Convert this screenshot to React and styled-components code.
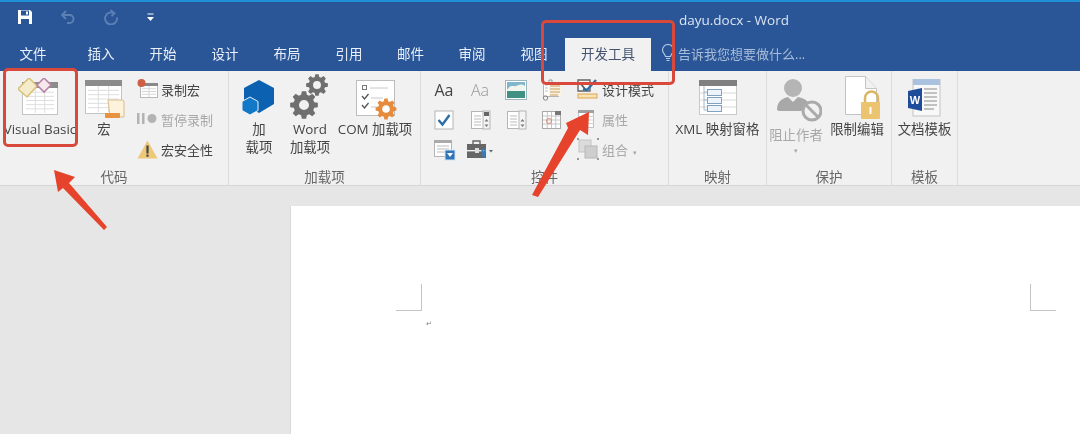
import React from "react";
import styled, { createGlobalStyle } from "styled-components";

const CJK = `"Open Sans", "Noto Sans CJK SC", sans-serif`;

const Global = createGlobalStyle`
  html, body { margin: 0; padding: 0; background: #e6e6e6; }
  body { font-family: ${CJK}; overflow: hidden; }
  #root { width: 1080px; height: 434px; overflow: hidden; }
`;

const Shell = styled.div`
  position: relative;
  width: 1080px;
  height: 434px;
  display: flex;
  flex-direction: column;
  overflow: hidden;
  filter: blur(0.3px);
`;
const Header = styled.header`
  background: #2a5698;
  border-top: 2px solid #1f8fd6;
  color: #fff;
`;
const TitleBar = styled.div`
  height: 36px;
  display: flex;
  align-items: center;
  padding-left: 17px;
`;
const QuickButton = styled.span`
  width: 43px;
  display: flex;
  align-items: center;
  margin-bottom: 6px;
  opacity: ${p => (p.$dim ? 0.4 : 1)};
`;
const DocTitle = styled.div`
  margin-left: 490px;
  font-size: 13.5px;
  color: #dbe4f2;
  white-space: nowrap;
`;
const TabRow = styled.nav`
  height: 33px;
  display: flex;
  align-items: stretch;
`;
const Tab = styled.div`
  width: ${p => p.$w || 62}px;
  padding-right: ${p => p.$pr || 0}px;
  box-sizing: border-box;
  display: flex;
  align-items: center;
  justify-content: center;
  font-size: 13.5px;
  padding-bottom: 3px;
  color: ${p => (p.$active ? "#44546f" : "#eaf0f8")};
  background: ${p => (p.$active ? "#f1f1f1" : "transparent")};
`;
const TellMe = styled.div`
  display: flex;
  align-items: center;
  gap: 3px;
  margin-left: 10px;
  padding-bottom: 3px;
  font-size: 13px;
  color: #a9bcd9;
`;
const Ribbon = styled.section`
  height: 114px;
  background: #f1f1f1;
  border-bottom: 1px solid #d6d6d6;
  display: flex;
`;
const Group = styled.div`
  width: ${p => p.$w}px;
  box-sizing: border-box;
  border-right: 1px solid #dcdcdc;
  display: flex;
  flex-direction: column;
`;
const GroupBody = styled.div`
  flex: 1;
  display: flex;
  padding: 4px 0 0 ${p => p.$pl || 0}px;
  min-height: 0;
`;
const GroupLabel = styled.div`
  height: 16px;
  line-height: 16px;
  text-align: center;
  font-size: 13.5px;
  color: #666;
`;
const Large = styled.div`
  width: ${p => p.$w}px;
  flex: none;
  display: flex;
  flex-direction: column;
  align-items: center;
  font-size: 13.4px;
  line-height: 18px;
  color: ${p => (p.$off ? "#a8a8a8" : "#444")};
  white-space: nowrap;
  text-align: center;
`;
const LargeIcon = styled.div`
  height: ${p => p.$h || 45}px;
  display: flex;
  align-items: center;
  justify-content: center;
`;
const Caret = styled.div`
  font-size: 7px;
  line-height: 14px;
  color: #a8a8a8;
`;
const TinyCaret = styled.span`
  margin-left: 5px;
  font-size: 7px;
  color: #a8a8a8;
`;
const SmallColumn = styled.div`
  margin-left: ${p => p.$ml || 0}px;
  margin-top: -1px;
  display: flex;
  flex-direction: column;
`;
const SmallRow = styled.div`
  height: 30px;
  display: flex;
  align-items: center;
  gap: ${p => p.$gap || 3}px;
  font-size: 13px;
  white-space: nowrap;
  color: ${p => (p.$off ? "#a8a8a8" : "#444")};
`;
const ControlGrid = styled.div`
  display: grid;
  grid-template-columns: repeat(4, 36px);
  grid-auto-rows: 30px;
  align-items: center;
  justify-items: center;
`;
const AaGlyph = styled.span`
  font-family: "Open Sans", sans-serif;
  font-size: 16px;
  font-weight: ${p => (p.$light ? 300 : 400)};
  color: ${p => (p.$light ? "#999" : "#444")};
`;
const Workspace = styled.main`
  flex: 1;
  min-height: 0;
  background: #e6e6e6;
  padding: 20px 0 0 290px;
  display: flex;
`;
const Page = styled.div`
  flex: 1;
  background: #fff;
  border-left: 1px solid #d8d8d8;
  box-sizing: border-box;
  padding: 78px 24px 0 105px;
`;
const MarkRow = styled.div`
  display: flex;
  justify-content: space-between;
`;
const CropMark = styled.div`
  width: 25px;
  height: 26px;
  border-bottom: 1px solid #c4c4c4;
  border-right: ${p => (p.$right ? "none" : "1px solid #c4c4c4")};
  border-left: ${p => (p.$right ? "1px solid #c4c4c4" : "none")};
`;
const ParaMark = styled.div`
  margin: 8px 0 0 30px;
  font-size: 7px;
  line-height: 10px;
  color: #777;
`;
const Highlight = styled.div`
  position: absolute;
  left: ${p => p.$x}px;
  top: ${p => p.$y}px;
  width: ${p => p.$w}px;
  height: ${p => p.$h}px;
  box-sizing: border-box;
  border: 3px solid #d8493c;
  border-radius: 5px;
  pointer-events: none;
`;
const Arrows = styled.svg`
  position: absolute;
  left: 0;
  top: 0;
  pointer-events: none;
`;

const gearPath = (cx, cy, R, r, hole, teeth = 8) => {
  const pts = [];
  const step = (Math.PI * 2) / teeth;
  for (let i = 0; i < teeth; i++) {
    const a = i * step;
    [[-0.3, r], [-0.17, R], [0.17, R], [0.3, r]].forEach(([o, rad]) => {
      const t = a + o * step * 1.15;
      pts.push(`${(cx + rad * Math.cos(t)).toFixed(2)} ${(cy + rad * Math.sin(t)).toFixed(2)}`);
    });
  }
  return `M${pts.join("L")}Z M${cx - hole} ${cy}a${hole} ${hole} 0 1 0 ${hole * 2} 0a${hole} ${hole} 0 1 0 ${-hole * 2} 0Z`;
};

const Gear = ({ cx, cy, R, color }) => (
  <path d={gearPath(cx, cy, R, R * 0.76, R * 0.36)} fill={color} fillRule="evenodd" />
);

const SheetLines = ({ x, y, w, h, rows = 4, cols = 3, color = "#d4d4d4" }) => (
  <g stroke={color} strokeWidth="1">
    {Array.from({ length: rows }, (_, i) => (
      <line key={i} x1={x} x2={x + w} y1={y + ((i + 1) * h) / (rows + 1)} y2={y + ((i + 1) * h) / (rows + 1)} />
    ))}
    {Array.from({ length: cols - 1 }, (_, i) => (
      <line key={i} y1={y} y2={y + h} x1={x + ((i + 1) * w) / cols} x2={x + ((i + 1) * w) / cols} />
    ))}
  </g>
);

const SaveIcon = () => (
  <svg width="16" height="16" viewBox="0 0 16 16">
    <path d="M1 1h12l2 2v12H1z" fill="#fff" />
    <rect x="4" y="1.5" width="8" height="5" fill="#2a5698" />
    <rect x="4" y="10" width="8" height="5" fill="#2a5698" />
    <rect x="9" y="2.5" width="2" height="3" fill="#fff" />
  </svg>
);
const UndoIcon = ({ flip }) => (
  <svg width="16" height="16" viewBox="0 0 16 16" fill="none" stroke="#a9c0e0" strokeWidth="1.8">
    {flip ? (
      <g>
        <path d="M11 4.2A6 6 0 1 0 14 8.5" />
        <path d="M7.5 1l4 3.2-3 3" />
      </g>
    ) : (
      <g>
        <path d="M2.5 6h7a4 4 0 0 1 0 8H7" />
        <path d="M6 2L2 6l4 4" />
      </g>
    )}
  </svg>
);
const DropIcon = () => (
  <svg width="9" height="9" viewBox="0 0 9 9">
    <rect x="1.5" y="0.5" width="6" height="1" fill="#fff" />
    <path d="M1 4h7L4.5 8z" fill="#fff" />
  </svg>
);
const BulbIcon = () => (
  <svg width="14" height="18" viewBox="0 0 14 18" fill="none" stroke="#b9cbe4" strokeWidth="1.1">
    <path d="M4.5 12.5C4 10 1.5 9 1.5 6a5.5 5.5 0 0 1 11 0c0 3-2.5 4-3 6.5z" />
    <path d="M5 14.5h4M5.5 16.5h3" />
  </svg>
);
const VbIcon = () => (
  <svg width="44" height="40" viewBox="0 0 44 40">
    <rect x="4.5" y="4.5" width="35" height="32" fill="#fff" stroke="#c4c4c4" />
    <rect x="4" y="4" width="36" height="6" fill="#8c8c8c" />
    <SheetLines x={8} y={10} w={28} h={25} rows={5} cols={3} color="#dedede" />
    <path d="M0 11L11 0l8 8-10 11z" fill="#f4eccb" stroke="#d9c27a" strokeWidth="1.6" />
    <path d="M19 7l7-7 7 7-7 7z" fill="#f6e9ee" stroke="#b983a8" strokeWidth="1.6" />
  </svg>
);
const MacroIcon = () => (
  <svg width="42" height="42" viewBox="0 0 42 42">
    <rect x="2.5" y="3.5" width="36" height="33" fill="#fff" stroke="#c4c4c4" />
    <rect x="2" y="3" width="37" height="6" fill="#8c8c8c" />
    <SheetLines x={5} y={9} w={31} h={26} rows={5} cols={3} color="#dedede" />
    <path d="M25 23h14a2 2 0 0 1 2 2v15H27z" fill="#fdf3dc" stroke="#d8bd88" />
    <rect x="22" y="36" width="15" height="5" rx="1" fill="#e9923e" />
  </svg>
);
const RecordIcon = () => (
  <svg width="21" height="20" viewBox="0 0 21 20">
    <rect x="3.5" y="4.5" width="17" height="14" fill="#fff" stroke="#b9b9b9" />
    <rect x="3" y="4" width="18" height="3" fill="#888" />
    <SheetLines x={5} y={7} w={14} h={11} rows={3} cols={2} color="#d6d6d6" />
    <circle cx="4.5" cy="4" r="4" fill="#cf5f43" />
  </svg>
);
const PauseIcon = () => (
  <svg width="21" height="14" viewBox="0 0 21 14" fill="#b3b3b3">
    <rect x="0" y="1" width="2.5" height="11" />
    <rect x="5" y="1" width="2.5" height="11" />
    <circle cx="15" cy="6.5" r="4.5" />
  </svg>
);
const WarnIcon = () => (
  <svg width="21" height="19" viewBox="0 0 21 19">
    <path d="M10.5 0.5l10 18H.5z" fill="#edc879" />
    <rect x="9.4" y="5.5" width="2.2" height="8" fill="#444" />
    <rect x="9.4" y="14.5" width="2.2" height="2.2" fill="#444" />
  </svg>
);
const HexIcon = () => (
  <svg width="34" height="36" viewBox="0 0 34 36">
    <path d="M17 0l15 8v16l-15 9-15-9V8z" fill="#0c62b0" />
    <path d="M8 17l8 4.5v9L8 35l-8-4.5v-9z" fill="#1279c9" stroke="#f1f1f1" strokeWidth="1" />
  </svg>
);
const GearsIcon = () => (
  <svg width="40" height="47" viewBox="0 0 40 47">
    <Gear cx={27} cy={11} R={11} color="#6f6f6f" />
    <Gear cx={14} cy={31} R={14} color="#6f6f6f" />
  </svg>
);
const ComIcon = () => (
  <svg width="44" height="44" viewBox="0 0 44 44">
    <rect x="3.5" y="4.5" width="38" height="35" fill="#fff" stroke="#bdbdbd" />
    <rect x="9.5" y="9.5" width="4" height="4" fill="none" stroke="#777" />
    <g fill="none" stroke="#555" strokeWidth="1.3">
      <path d="M9 20l2.5 3 4-5" />
      <path d="M9 29l2.5 3 4-5" />
    </g>
    <g stroke="#c8c8c8">
      <line x1="17" y1="12" x2="35" y2="12" />
      <line x1="18" y1="22" x2="30" y2="22" />
      <line x1="18" y1="31" x2="26" y2="31" />
    </g>
    <Gear cx={33} cy={33} R={10.5} color="#e68a3c" />
  </svg>
);
const CheckBoxIcon = () => (
  <svg width="20" height="20" viewBox="0 0 20 20">
    <rect x="1" y="1" width="18" height="18" fill="#fff" stroke="#b5b5b5" />
    <path d="M4.5 10l4 4.5L15.5 5" fill="none" stroke="#2f6ea5" strokeWidth="2.4" />
  </svg>
);
const PictureIcon = () => (
  <svg width="22" height="20" viewBox="0 0 22 20">
    <rect x="0.5" y="0.5" width="21" height="19" fill="#fff" stroke="#9cb6bb" />
    <rect x="2" y="2" width="18" height="8" fill="#7fb6cc" />
    <path d="M2 10c4-6 6-3 9-4s5-3 9 0v5H2z" fill="#f2f5ef" />
    <rect x="2" y="11" width="18" height="7" fill="#3f9183" />
  </svg>
);
const BuildingIcon = () => (
  <svg width="20" height="22" viewBox="0 0 20 22">
    <rect x="1.5" y="3.5" width="15" height="14" fill="#fff" stroke="#b5b5b5" />
    <rect x="7" y="5" width="12" height="12" fill="#fbf3e2" />
    <path d="M8 7h10M8 10h10M8 13h10M8 16h8" stroke="#c99c60" />
    <path d="M3 6h3M3 9h3M3 12h3" stroke="#bbb" />
    <path d="M7 3V1h3v2" fill="none" stroke="#999" />
    <circle cx="3.5" cy="19" r="2.2" fill="none" stroke="#888" />
  </svg>
);
const ListBoxIcon = ({ dark }) => (
  <svg width="22" height="20" viewBox="0 0 22 20">
    <rect x="2.5" y="1.5" width="18" height="17" fill="#fff" stroke="#b5b5b5" />
    <rect x="14" y="1" width="7" height="18" fill="#f4f4f4" stroke="#b5b5b5" />
    {dark && <rect x="15" y="2" width="5" height="4" fill="#666" />}
    <path d="M5 6h7M5 9h7M5 12h7M5 15h7" stroke="#bbb" />
    <path d="M17.5 9l-2 2.5h4zM17.5 17l-2-2.5h4z" fill="#777" />
  </svg>
);
const CalendarIcon = () => (
  <svg width="20" height="20" viewBox="0 0 20 20">
    <rect x="0.5" y="1.5" width="18" height="17" fill="#fff" stroke="#aaa" />
    <SheetLines x={1} y={2} w={17} h={16} rows={3} cols={4} color="#c4c4c4" />
    <rect x="13" y="1" width="6" height="4" fill="#777" />
    <circle cx="7" cy="11" r="2.5" fill="none" stroke="#d58b70" />
  </svg>
);
const ComboIcon = () => (
  <svg width="24" height="22" viewBox="0 0 24 22">
    <rect x="2.5" y="1.5" width="17" height="16" fill="#fff" stroke="#b5b5b5" />
    <rect x="2" y="1" width="18" height="3" fill="#aaa" />
    <path d="M5 7h12M5 10h12M5 13h8" stroke="#bbb" />
    <rect x="13" y="11" width="10" height="10" fill="#2f75b5" stroke="#cfe3f6" />
    <path d="M15 14h6l-3 4z" fill="#fff" />
  </svg>
);
const ToolboxIcon = () => (
  <svg width="26" height="20" viewBox="0 0 26 20">
    <rect x="0" y="4" width="19" height="14" fill="#666" />
    <path d="M6 4V1h7v3" fill="none" stroke="#666" strokeWidth="1.4" />
    <rect x="0" y="10" width="19" height="1.4" fill="#f1f1f1" />
    <rect x="8" y="8" width="4" height="5" fill="#ddd" />
    <path d="M15 9l2 9M18 9l-1 9" stroke="#3a7cb8" strokeWidth="2" />
    <path d="M22 10h4l-2 2.5z" fill="#666" />
  </svg>
);
const DesignIcon = () => (
  <svg width="22" height="22" viewBox="0 0 22 22">
    <path d="M1 2h12v11H1z" fill="#f6f6f6" stroke="#666" strokeWidth="1.4" />
    <path d="M3 5l6 7" stroke="#555" strokeWidth="1.6" />
    <path d="M6 11l4 1 9-10" fill="none" stroke="#2f6ea5" strokeWidth="2.4" />
    <rect x="1" y="16" width="19" height="4" fill="#f7e3b6" stroke="#e0a548" />
  </svg>
);
const PropsIcon = () => (
  <svg width="18" height="20" viewBox="0 0 18 20">
    <rect x="1.5" y="1.5" width="15" height="17" fill="#fff" stroke="#c4c4c4" />
    <rect x="1" y="1" width="16" height="3" fill="#a0a0a0" />
    <SheetLines x={2} y={4} w={14} h={14} rows={3} cols={2} color="#d4d4d4" />
  </svg>
);
const GroupIcon = () => (
  <svg width="22" height="22" viewBox="0 0 22 22">
    <rect x="2" y="2" width="12" height="12" fill="#dcdcdc" stroke="#c4c4c4" />
    <rect x="8" y="8" width="12" height="12" fill="#cecece" stroke="#b8b8b8" />
    <g fill="#999">
      <rect x="0" y="0" width="2" height="2" />
      <rect x="20" y="20" width="2" height="2" />
      <rect x="20" y="0" width="2" height="2" />
      <rect x="0" y="20" width="2" height="2" />
    </g>
  </svg>
);
const XmlPaneIcon = () => (
  <svg width="40" height="37" viewBox="0 0 40 37">
    <rect x="1.5" y="1.5" width="37" height="34" fill="#fff" stroke="#c9c9c9" />
    <rect x="1" y="1" width="38" height="6" fill="#808080" />
    <SheetLines x={2} y={7} w={36} h={28} rows={3} cols={1} color="#d8d8d8" />
    <g fill="#eef4f9" stroke="#7ea3c2">
      <rect x="9.5" y="10.5" width="14" height="6" />
      <rect x="9.5" y="18.5" width="14" height="6" />
      <rect x="9.5" y="26.5" width="14" height="6" />
    </g>
    <path d="M6 7v24h3M6 13h3M6 21h3" fill="none" stroke="#9dbad0" />
  </svg>
);
const AuthorIcon = () => (
  <svg width="52" height="46" viewBox="-7 0 52 46">
    <circle cx="16" cy="10" r="9" fill="#b5b5b5" />
    <path d="M0 32c0-10 7-12 11-13l5 5 5-5c5 1 10 3 11 8l-8 6H2z" fill="#a8a8a8" />
    <circle cx="35" cy="33" r="9" fill="#f1f1f1" stroke="#aaa" strokeWidth="3" />
    <line x1="29" y1="27" x2="41" y2="39" stroke="#aaa" strokeWidth="3" />
  </svg>
);
const LockDocIcon = () => (
  <svg width="48" height="46" viewBox="-11 0 48 46">
    <path d="M1.5 1.5h20l11 12v26h-31z" fill="#fff" stroke="#c4c4c4" />
    <path d="M21.5 1.5v12h11" fill="#f1f1f1" stroke="#c4c4c4" />
    <path d="M21 28v-5a6.5 6.5 0 0 1 13 0v5" fill="none" stroke="#d9b768" strokeWidth="2.5" />
    <rect x="17" y="27" width="19" height="17" rx="1" fill="#ecc46f" />
    <rect x="25.5" y="32" width="2" height="7" fill="#fff" />
  </svg>
);
const TemplateIcon = () => (
  <svg width="34" height="38" viewBox="0 0 34 38">
    <rect x="5" y="0" width="27" height="37" fill="#f8f8f8" stroke="#c4c4c4" />
    <rect x="5" y="0" width="27" height="6" fill="#a9c2e0" />
    <path d="M16 10h13M16 14h13M16 18h13M16 22h13M16 26h13M16 30h10" stroke="#8b8b8b" />
    <path d="M0 12l14-3v23L0 29z" fill="#1f4d99" />
    <text x="7" y="25" fill="#fff" fontFamily="Liberation Sans, sans-serif" fontSize="11" fontWeight="700" textAnchor="middle">W</text>
  </svg>
);

const tabs = [
  ["插入", 62], ["开始", 62], ["设计", 62], ["布局", 62],
  ["引用", 62], ["邮件", 61], ["审阅", 62], ["视图", 62],
];

export default function App() {
  return (
    <Shell>
      <Global />
      <Header>
        <TitleBar>
          <QuickButton><SaveIcon /></QuickButton>
          <QuickButton $dim><UndoIcon /></QuickButton>
          <QuickButton $dim><UndoIcon flip /></QuickButton>
          <QuickButton><DropIcon /></QuickButton>
          <DocTitle>dayu.docx - Word</DocTitle>
        </TitleBar>
        <TabRow>
          <Tab $w={70} $pr={4}>文件</Tab>
          {tabs.map(([t, w]) => <Tab key={t} $w={w}>{t}</Tab>)}
          <Tab $w={86} $active>开发工具</Tab>
          <TellMe><BulbIcon />告诉我您想要做什么...</TellMe>
        </TabRow>
      </Header>

      <Ribbon>
        <Group $w={229}>
          <GroupBody $pl={3}>
            <Large $w={74}>
              <LargeIcon><VbIcon /></LargeIcon>
              Visual Basic
            </Large>
            <Large $w={54}>
              <LargeIcon><MacroIcon /></LargeIcon>
              宏
            </Large>
            <SmallColumn $ml={6}>
              <SmallRow><RecordIcon />录制宏</SmallRow>
              <SmallRow $off><PauseIcon />暂停录制</SmallRow>
              <SmallRow><WarnIcon />宏安全性</SmallRow>
            </SmallColumn>
          </GroupBody>
          <GroupLabel>代码</GroupLabel>
        </Group>

        <Group $w={192}>
          <GroupBody>
            <Large $w={60}>
              <LargeIcon><HexIcon /></LargeIcon>
              加<br />载项
            </Large>
            <Large $w={42}>
              <LargeIcon><GearsIcon /></LargeIcon>
              Word<br />加载项
            </Large>
            <Large $w={88}>
              <LargeIcon><ComIcon /></LargeIcon>
              COM 加载项
            </Large>
          </GroupBody>
          <GroupLabel>加载项</GroupLabel>
        </Group>

        <Group $w={248}>
          <GroupBody $pl={5}>
            <ControlGrid>
              <AaGlyph>Aa</AaGlyph>
              <AaGlyph $light>Aa</AaGlyph>
              <PictureIcon />
              <BuildingIcon />
              <CheckBoxIcon />
              <ListBoxIcon dark />
              <ListBoxIcon />
              <CalendarIcon />
              <ComboIcon />
              <ToolboxIcon />
            </ControlGrid>
            <SmallColumn $ml={7}>
              <SmallRow><DesignIcon />设计模式</SmallRow>
              <SmallRow $off $gap={7}><PropsIcon />属性</SmallRow>
              <SmallRow $off><GroupIcon /><span>组合<TinyCaret>▾</TinyCaret></span></SmallRow>
            </SmallColumn>
          </GroupBody>
          <GroupLabel>控件</GroupLabel>
        </Group>

        <Group $w={98}>
          <GroupBody>
            <Large $w={97}>
              <LargeIcon><XmlPaneIcon /></LargeIcon>
              XML 映射窗格
            </Large>
          </GroupBody>
          <GroupLabel>映射</GroupLabel>
        </Group>

        <Group $w={125}>
          <GroupBody>
            <Large $w={58} $off>
              <LargeIcon $h={51}><AuthorIcon /></LargeIcon>
              阻止作者
              <Caret>▾</Caret>
            </Large>
            <Large $w={64}>
              <LargeIcon><LockDocIcon /></LargeIcon>
              限制编辑
            </Large>
          </GroupBody>
          <GroupLabel>保护</GroupLabel>
        </Group>

        <Group $w={66}>
          <GroupBody>
            <Large $w={65}>
              <LargeIcon><TemplateIcon /></LargeIcon>
              文档模板
            </Large>
          </GroupBody>
          <GroupLabel>模板</GroupLabel>
        </Group>
      </Ribbon>

      <Workspace>
        <Page>
          <MarkRow>
            <CropMark />
            <CropMark $right />
          </MarkRow>
          <ParaMark>↵</ParaMark>
        </Page>
      </Workspace>

      <Highlight $x={3} $y={68} $w={75} $h={79} />
      <Highlight $x={541} $y={20} $w={134} $h={65} />
      <Arrows width="1080" height="434" viewBox="0 0 1080 434">
        <path d="M54 170L75 177 69 183 107 227 104 230 63 188 58 192z" fill="#e5432b" />
        <path d="M589 112L588 135 580 130 538 197 532 195 568 128 566 123z" fill="#e5432b" />
      </Arrows>
    </Shell>
  );
}
